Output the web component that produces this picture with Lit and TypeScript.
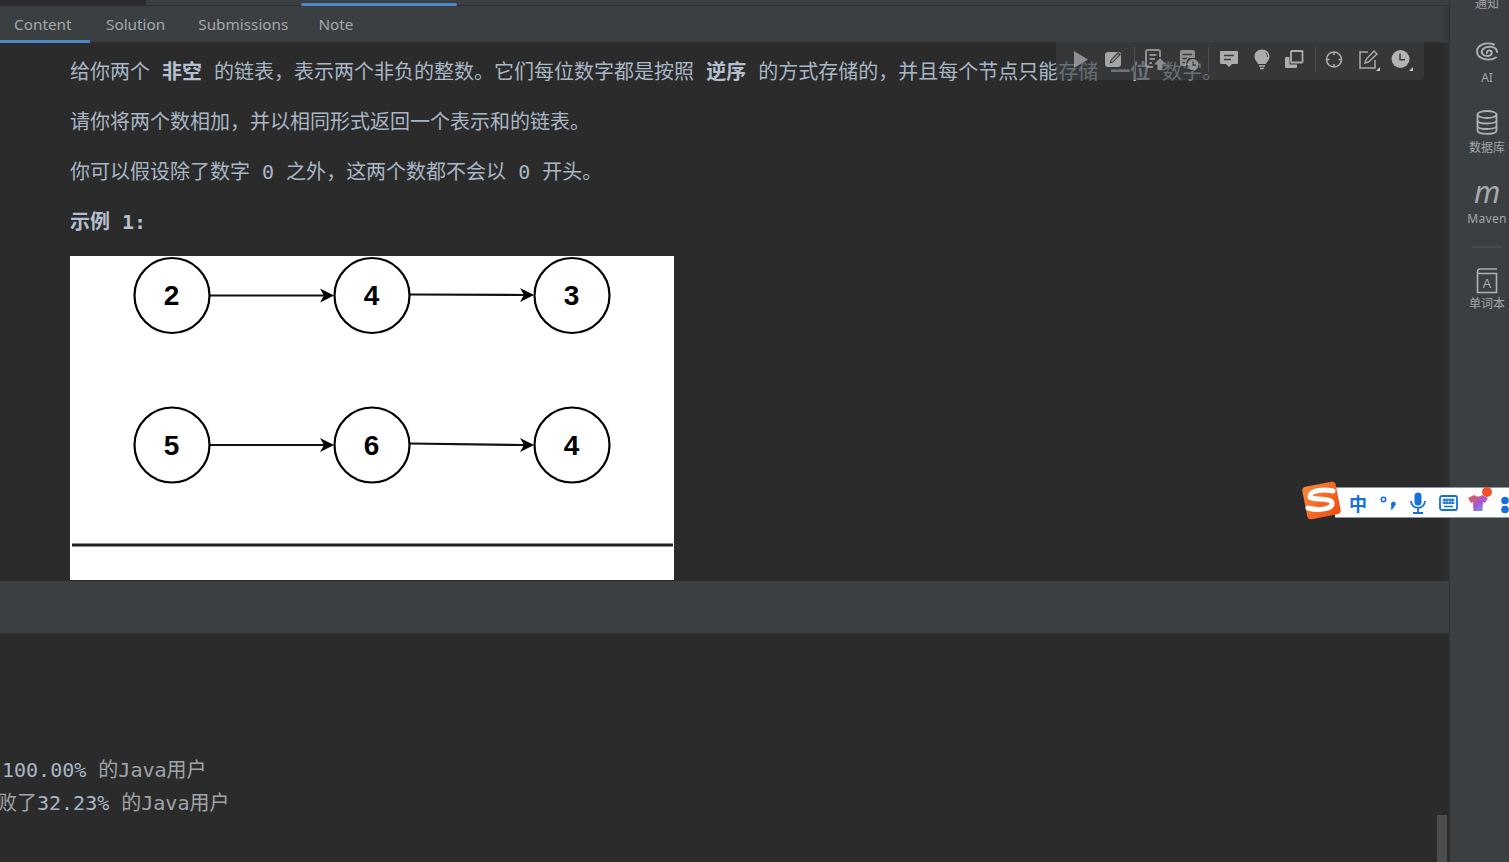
import { LitElement, html, css, svg } from "lit";
import { customElement } from "lit/decorators.js";

const MONO = css`"DejaVu Sans Mono", "Noto Sans CJK SC", monospace`;
const C = "\uFF0C";

const node = (x: number, y: number, t: string) => svg`
  <circle cx=${x} cy=${y} r="37.5" fill="#fff" stroke="#000" stroke-width="2.2"></circle>
  <text x=${x - 0.5} y=${y + 9.5} text-anchor="middle" class="digit">${t}</text>`;
const arrow = (x1: number, y1: number, x2: number, y2: number) => svg`
  <line x1=${x1} y1=${y1} x2=${x2 - 10} y2=${y2} stroke="#111" stroke-width="2.2"></line>
  <path d="M${x2} ${y2} L${x2 - 14} ${y2 - 7} L${x2 - 10} ${y2} L${x2 - 14} ${y2 + 7} Z" fill="#000"></path>`;

const I = "#a4a6a8";
const icons = {
  play: svg`<path d="M4 2 L18 10.5 L4 19 Z" fill=${I}></path>`,
  editFill: svg`<path d="M5 3 H16 Q18 3 18 5 V15 Q18 18 15 18 H5 Q2 18 2 15 V6 Q2 3 5 3 Z" fill=${I}></path><path d="M6.5 14.5 L7.5 11 L15 3 L18 5.5 L10 13.5 Z" fill="#3a3d3f"></path><path d="M8.5 12.6 L15.5 5.5" stroke=${I} stroke-width="1.4"></path>`,
  docUp: svg`<path d="M9 18 H4 Q2 18 2 16 V3 Q2 1 4 1 H14 Q16 1 16 3 V8" fill="none" stroke=${I} stroke-width="2"></path><path d="M5.5 6 H12.5 M5.5 10 H11 M5.5 14 H8" stroke=${I} stroke-width="2"></path><path d="M16 9 L22 15.5 H18.5 V21 H13.5 V15.5 H10 Z" fill=${I}></path>`,
  docClock: svg`<path d="M3 3 Q3 1 5 1 H16 Q18 1 18 3 V9 H12 Q9 11 9 17 H5 Q3 17 3 15 Z" fill=${I}></path><path d="M5.5 5.5 H15 M5.5 9.5 H10 M5.5 13.5 H8" stroke="#3a3d3f" stroke-width="1.5"></path><circle cx="16" cy="15.5" r="5.5" fill=${I}></circle><path d="M16 12.5 V16 H19" fill="none" stroke="#3a3d3f" stroke-width="1.3"></path>`,
  comment: svg`<path d="M3 2 H19 Q20 2 20 3 V14 Q20 15 19 15 H14 L11 18 L8 15 H3 Q2 15 2 14 V3 Q2 2 3 2 Z" fill="#aaacae"></path><path d="M6 6.5 H16 M6 10.5 H13" stroke="#3a3d3f" stroke-width="1.6"></path>`,
  bulb: svg`<path d="M11 0.5 C6.5 0.5 3.5 3.5 3.5 7.5 C3.5 11 6 12.5 7 15 H15 C16 12.5 18.5 11 18.5 7.5 C18.5 3.5 15.5 0.5 11 0.5 Z" fill="#aaacae"></path><path d="M14.5 3.5 Q16.5 5 16.5 8" fill="none" stroke="#3a3d3f" stroke-width="0.9"></path><path d="M8 17 H14 M9 19.5 H13" stroke="#aaacae" stroke-width="1.4"></path>`,
  copy: svg`<rect x="7" y="2" width="11.5" height="11.5" fill="none" stroke="#aaacae" stroke-width="1.8" rx="0.5"></rect><path d="M1 9 Q1 8 2 8 H5.5 V15.5 H13 V18 Q13 19 12 19 H2 Q1 19 1 18 Z" fill="#aaacae"></path>`,
  target: svg`<circle cx="9" cy="10.5" r="7.5" fill="none" stroke="#aaacae" stroke-width="1.6"></circle><path d="M9 3 V6 M9 15 V18 M1.5 10.5 H4.5 M13.5 10.5 H16.5" stroke="#aaacae" stroke-width="1.6"></path>`,
  editLine: svg`<path d="M10 3 H2 V19 H17 V11" fill="none" stroke="#aaacae" stroke-width="1.5"></path><path d="M7 14 L8 10.5 L16 2 L19 5 L10.5 13 Z" fill="none" stroke="#aaacae" stroke-width="1.4"></path><path d="M22 18 V22 H18 Z" fill="#c8c8c8"></path>`,
  clock: svg`<circle cx="9.5" cy="10" r="9" fill="#b0b2b4"></circle><path d="M9 4.5 V10.8 H14" fill="none" stroke="#3a3d3f" stroke-width="1.5"></path><path d="M22 18 V22 H18 Z" fill="#c8c8c8"></path>`,
};
const tool = (c: unknown, dim = false) =>
  html`<span class="tool ${dim ? "dim" : ""}"><svg width="24" height="22" viewBox="0 0 24 22">${c}</svg></span>`;

@customElement("app-root")
export class AppRoot extends LitElement {
  static styles = css`
    :host { display: block; width: 1509px; height: 862px; overflow: hidden; position: relative;
      background: #2b2b2b; font-family: "Noto Sans", "Noto Sans CJK SC", sans-serif; }
    .root { display: flex; height: 100%; }
    .main { width: 1449px; display: flex; flex-direction: column; position: relative; }

    .strip { height: 5px; flex: none; display: flex; background: #3c3f41; border-bottom: 1px solid #323232; }
    .strip .dark { width: 146px; background: #2b2b2d; }
    .strip .ind { width: 156px; margin-left: 155px; margin-top: 3px; height: 3px; background: #4a88c7; border-radius: 2px; }

    .tabs { height: 37px; flex: none; display: flex; background: #3c3f41; box-shadow: inset 0 -1px #323232; }
    .tab { padding: 0 15.5px 0 16px; font-size: 15.3px; line-height: 36px; color: #a4a8ab; border-bottom: 3px solid transparent; box-sizing: border-box; height: 37px; }
    .tab.on { padding-left: 14px; padding-right: 0; width: 90px; flex: none; border-bottom-color: #4a88c7; }
    .tab.wide { padding-right: 17px; }
    .tab.tight { padding-right: 14px; }
    .track { margin-left: auto; width: 5px; background: #36393b; }

    .content { flex: 1; min-height: 0; overflow: hidden; background: #2b2b2b; border-right: 5px solid #2e2e2e;
      padding: 14px 0 0 70px; font-family: ${MONO}; font-size: 20px; line-height: 30px; color: #a9b7c6; }
    .content p { margin: 0 0 20px; white-space: nowrap; }
    .content p.last { margin-bottom: 19px; }
    .content b { font-weight: 700; color: #b4c0d0; }
    .content svg { display: block; }
    .digit { font: 700 28px "Liberation Sans", sans-serif; fill: #000; }

    .divider { height: 52px; flex: none; background: #3c3f41; }
    .console { height: 229px; flex: none; box-sizing: border-box; border-top: 1px solid #323232; background: #2b2b2b; padding-top: 120px;
      overflow: hidden; font-family: ${MONO}; font-size: 20px; line-height: 33px; color: #a0a4a8; white-space: nowrap; }
    .console div:nth-child(1) { padding-left: 2px; }
    .console div:nth-child(2) { margin-left: -3px; }
    .num { color: #a9b7c6; }
    .thumb { position: absolute; right: 2px; bottom: 0; width: 10px; height: 47px; background: #4c4d4e; }

    .toolbar { position: absolute; left: 1056px; top: 38px; width: 368px; height: 42px; box-sizing: border-box; padding: 2px 0 0 8px;
      display: flex; align-items: center; background: rgba(60, 63, 65, 0.6); border-radius: 4px; }
    .tool { width: 33px; display: flex; justify-content: center; padding-left: 2px; box-sizing: border-box; }
    .tool.dim { opacity: 0.8; }
    .sep { width: 1px; height: 25px; margin: -2px 3px 0 4px; background: #4d5052; }
    .tool svg { display: block; }

    .side { flex: 1; border-left: 1px solid #323232; background: #3c3f41; display: flex; flex-direction: column; align-items: center;
      box-sizing: border-box; padding-left: 15px; font-size: 12px; line-height: 16px; color: #a2a6a9; overflow: hidden; }
    .item { display: flex; flex-direction: column; align-items: center; white-space: nowrap; }
    .item .lab { height: 16px; }
    .item svg { display: block; margin-bottom: 4px; }
    .note { margin-top: -4px; }
    .ai { margin-top: 26px; }
    .db { margin-top: 22px; }
    .mv { margin-top: 24px; }
    .mv .lab { letter-spacing: 0.3px; }
    .m { height: 28px; font: italic 400 30px/24px "Noto Sans", sans-serif; color: #a8abad; margin-bottom: 3px; }
    .rule { width: 30px; height: 2px; margin-top: 19px; background: #47494b; flex: none; }
    .bk { margin-top: 18px; }
    .bk svg { margin-bottom: 2px; }

    .ime { position: absolute; left: 1302px; top: 481px; width: 207px; height: 40px; }
    .bar { position: absolute; left: 33px; right: 0; top: 6px; height: 31px; box-sizing: border-box; background: #fff;
      border-top: 1px solid #8a97a6; border-bottom: 1px solid #8a97a6; display: flex; align-items: center; padding-left: 8px; overflow: hidden; }
    .bar span { width: 30px; flex: none; display: flex; justify-content: center; align-items: center; }
    .bar .edge { justify-content: flex-start; padding: 5px 0 0 7px; box-sizing: border-box; }
    .zh { font: 700 18px "Noto Sans CJK SC", sans-serif; color: #1670d8; }
    .logo { position: absolute; left: 0; top: 0; }
    .dot { position: absolute; left: 180px; top: 6px; width: 10px; height: 10px; border-radius: 50%; background: #f2502a; }
  `;

  render() {
    return html`
      <div class="root">
        <div class="main">
          <div class="strip"><div class="dark"></div><div class="ind"></div></div>
          <div class="tabs">
            <div class="tab on">Content</div>
            <div class="tab wide">Solution</div>
            <div class="tab tight">Submissions</div>
            <div class="tab">Note</div>
            <div class="track"></div>
          </div>
          <div class="content">
            <p>给你两个 <b>非空</b> 的链表${C}表示两个非负的整数。它们每位数字都是按照 <b>逆序</b> 的方式存储的${C}并且每个节点只能存储 <b>一位</b> 数字。</p>
            <p>请你将两个数相加${C}并以相同形式返回一个表示和的链表。</p>
            <p>你可以假设除了数字 0 之外${C}这两个数都不会以 0 开头。</p>
            <p class="last"><b>示例</b> <b>1:</b></p>
            <svg width="604" height="324" viewBox="0 0 604 324">
              <rect width="604" height="324" fill="#fff"></rect>
              ${arrow(140, 39.5, 264, 39.5)}${arrow(340, 38.5, 464, 39)}
              ${arrow(140, 189, 264, 189)}${arrow(340, 187.5, 464, 189)}
              ${node(102, 39.5, "2")}${node(302, 39.5, "4")}${node(502, 39.5, "3")}
              ${node(102, 189, "5")}${node(302, 189, "6")}${node(502, 189, "4")}
              <line x1="2" y1="289" x2="603" y2="289" stroke="#222" stroke-width="3.2"></line>
            </svg>
          </div>
          <div class="divider"></div>
          <div class="console">
            <div><span class="num">100.00%</span> 的Java用户</div>
            <div>败了<span class="num">32.23%</span> 的Java用户</div>
          </div>
          <div class="thumb"></div>
          <div class="toolbar">
            ${tool(icons.play, true)}${tool(icons.editFill)}<i class="sep"></i>
            ${tool(icons.docUp, true)}${tool(icons.docClock, true)}<i class="sep"></i>
            ${tool(icons.comment)}${tool(icons.bulb)}${tool(icons.copy)}<i class="sep"></i>
            ${tool(icons.target)}${tool(icons.editLine)}${tool(icons.clock)}
          </div>
        </div>
        <div class="side">
          <div class="item note"><div class="lab">通知</div></div>
          <div class="item ai">
            <svg width="24" height="28" viewBox="0 0 24 24" fill="none" stroke="#aeb1b3" stroke-width="1.9" stroke-linecap="round">
              <path d="M19 4.5 C11 1.5 2 5 2 11.5 C2 18.5 13 22 21 17.5"></path>
              <path d="M22 12 C22 6.5 12 5 8 9 C5 12.5 8 16.5 13 16 C17 15.5 18 11.5 15 10.5 C13 10 11.5 11.5 12 13"></path>
            </svg>
            <div class="lab">AI</div>
          </div>
          <div class="item db">
            <svg width="24" height="28" viewBox="0 0 24 28" fill="none" stroke="#aeb1b3" stroke-width="1.8">
              <ellipse cx="12" cy="6.5" rx="9.5" ry="3.5"></ellipse>
              <path d="M2.5 6.5 V22.5 C2.5 27 21.5 27 21.5 22.5 V6.5"></path>
              <path d="M2.5 12.5 C2.5 16.5 21.5 16.5 21.5 12.5 M2.5 18 C2.5 22 21.5 22 21.5 18"></path>
            </svg>
            <div class="lab">数据库</div>
          </div>
          <div class="item mv"><div class="m">m</div><div class="lab">Maven</div></div>
          <div class="rule"></div>
          <div class="item bk">
            <svg width="24" height="28" viewBox="0 0 24 28" fill="none" stroke="#aeb1b3" stroke-width="1.6">
              <path d="M22 3 H5 Q2.5 3 2.5 6 V26.5 H21.5 V7.5 H3"></path>
              <text x="12" y="22" text-anchor="middle" font-size="12.5" font-family="Liberation Sans" fill="#aeb1b3" stroke="none">A</text>
            </svg>
            <div class="lab">单词本</div>
          </div>
        </div>
        <div class="ime">
          <div class="bar">
            <span class="zh">中</span>
            <span><svg width="18" height="18" viewBox="0 0 18 18"><circle cx="4.5" cy="5.5" r="2.2" fill="none" stroke="#1670d8" stroke-width="1.6"></circle><path d="M12 10 a2.4 2.4 0 1 1 3.4 2.2 Q14.5 15 11.5 16 Q13 13.5 12 10Z" fill="#1670d8"></path></svg></span>
            <span><svg width="18" height="22" viewBox="0 0 18 22"><rect x="5.5" y="0.5" width="7" height="13" rx="3.5" fill="#1670d8"></rect><path d="M2 9 C2 18 16 18 16 9 M9 16 V20 M4 21 H14" fill="none" stroke="#1670d8" stroke-width="1.8"></path></svg></span>
            <span><svg width="19" height="16" viewBox="0 0 19 16"><rect x="1" y="1" width="17" height="14" rx="2" fill="none" stroke="#1670d8" stroke-width="1.8"></rect><path d="M3.5 5 H15.5 M3.5 8 H15.5 M5 11.5 H14 M5.5 3.5 V9 M8 3.5 V9 M11 3.5 V9 M13.5 3.5 V9" stroke="#1670d8" stroke-width="1.3"></path></svg></span>
            <span><svg width="20" height="18" viewBox="0 0 20 18"><defs><linearGradient id="sh" x1="0" y1="0" x2="1" y2="1"><stop offset="0" stop-color="#e8603c"></stop><stop offset="0.55" stop-color="#a858d8"></stop><stop offset="1" stop-color="#58b8f8"></stop></linearGradient></defs><path d="M6 1 Q10 4 14 1 L20 4 L17 9 L15 8 L14.5 17 H5.5 L5 8 L3 9 L0 4 Z" fill="url(#sh)"></path></svg></span>
            <span class="edge"><svg width="10" height="18" viewBox="0 0 10 18"><circle cx="5" cy="4.5" r="3.8" fill="#1670d8"></circle><circle cx="5" cy="13.5" r="3.8" fill="#1670d8"></circle></svg></span>
          </div>
          <div class="dot"></div>
          <svg class="logo" width="40" height="40" viewBox="0 0 40 40">
            <defs><linearGradient id="lg" x1="0" y1="0" x2="1" y2="1"><stop offset="0" stop-color="#f98a3a"></stop><stop offset="1" stop-color="#ee4a12"></stop></linearGradient></defs>
            <rect x="2.5" y="3" width="34" height="33" rx="4" fill="url(#lg)" transform="rotate(-11 19.5 19.5)"></rect>
            <path d="M31 10 C22 8 9 9 8 15 C7 20 29 16 30 22 C31 28 17 30 6 27" fill="none" stroke="#fff" stroke-width="5" stroke-linecap="round"></path>
          </svg>
        </div>
      </div>
    `;
  }
}
